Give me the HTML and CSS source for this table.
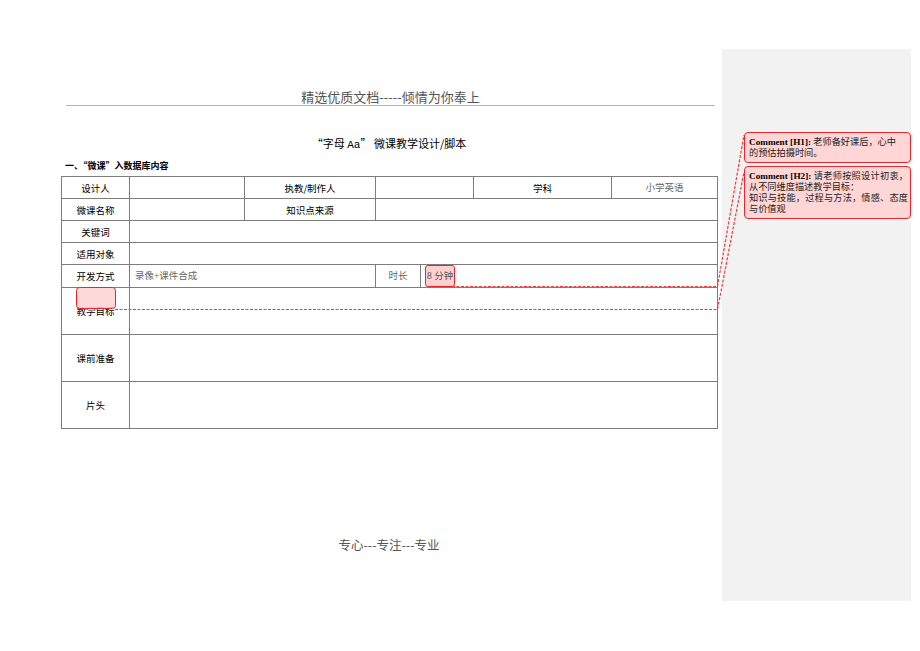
FILE: index.html
```html
<!DOCTYPE html>
<html lang="zh-CN">
<head>
  <meta charset="UTF-8">
  <meta name="viewport" content="width=device-width, initial-scale=1.0">
  <title>字母 Aa 微课教学设计</title>
  <link rel="stylesheet" href="styles.css">
</head>
<body>
  <div class="page">
    <main class="doc">
      <div class="doc-header">精选优质文档-----倾情为你奉上</div>
      <h1 class="title">“字母 <span class="mono">Aa</span>” 微课教学设计/脚本</h1>
      <h2 class="section">一、“微课”入数据库内容</h2>

      <table class="info">
        <colgroup>
          <col style="width: 68px">
          <col style="width: 115px">
          <col style="width: 131px">
          <col style="width: 45px">
          <col style="width: 53px">
          <col style="width: 138px">
          <col style="width: 106px">
        </colgroup>
        <tr>
          <td class="label">设计人</td>
          <td></td>
          <td class="label">执教/制作人</td>
          <td colspan="2"></td>
          <td class="label">学科</td>
          <td class="value center">小学英语</td>
        </tr>
        <tr>
          <td class="label">微课名称</td>
          <td></td>
          <td class="label">知识点来源</td>
          <td colspan="4"></td>
        </tr>
        <tr>
          <td class="label">关键词</td>
          <td colspan="6"></td>
        </tr>
        <tr>
          <td class="label">适用对象</td>
          <td colspan="6"></td>
        </tr>
        <tr class="row-dev">
          <td class="label">开发方式</td>
          <td colspan="2" class="value">录像+课件合成</td>
          <td class="value center">时长</td>
          <td colspan="3" class="value"><span class="mark">8 分钟</span></td>
        </tr>
        <tr class="tall">
          <td class="label">教学目标</td>
          <td colspan="6"></td>
        </tr>
        <tr class="tall">
          <td class="label">课前准备</td>
          <td colspan="6"></td>
        </tr>
        <tr class="tall">
          <td class="label">片头</td>
          <td colspan="6"></td>
        </tr>
      </table>

      <div class="doc-footer">专心---专注---专业</div>
    </main>

    <aside class="comments">
      <div class="comment"><b>Comment [H1]:</b> 老师备好课后，心中<br>的预估拍摄时间。</div>
      <div class="comment"><b>Comment [H2]:</b> 请老师按照设计初衷，从不同维度描述教学目标：<br>知识与技能，过程与方法，情感、态度与价值观</div>
    </aside>

    <svg class="links" width="920" height="651" viewBox="0 0 920 651">
      <rect x="76.5" y="287.5" width="39" height="21" rx="3" fill="#ffd0d0" fill-opacity="0.8" stroke="#e8262b"/>
      <polyline points="452,286.5 717.5,286.5 744,135" fill="none" stroke="#ee3b3b" stroke-width="1.2" stroke-dasharray="3 1.5"/>
      <polyline points="115,309.5 717.5,309.5 744,172" fill="none" stroke="#ee3b3b" stroke-width="1.2" stroke-dasharray="3 1.5"/>
    </svg>
  </div>
</body>
</html>
```

FILE: styles.css
```css
body {
  margin: 0;
  background: #fff;
  font-family: "Liberation Serif", "Noto Sans CJK SC", serif;
  color: #000;
}

.page {
  position: relative;
  display: flex;
  width: 920px;
  height: 651px;
}

.doc {
  width: 661px;
  padding: 88px 0 0 61px;
}

.doc-header {
  margin: 0 7px 0 5px;
  font-family: "Noto Sans CJK SC", sans-serif;
  font-size: 13px;
  line-height: 17px;
  color: #555;
  text-align: center;
  border-bottom: 1px solid #b5b5b5;
}

.title {
  margin: 30px 0 0;
  width: 656px;
  font-family: "Noto Sans CJK SC", sans-serif;
  font-size: 11px;
  font-weight: normal;
  line-height: 14px;
  text-align: center;
}

.mono {
  font-family: "Liberation Mono", monospace;
}

.section {
  margin: 7px 0 0 4px;
  font-family: "Noto Sans CJK SC", sans-serif;
  font-size: 9px;
  font-weight: bold;
  line-height: 14px;
}

.info {
  margin-top: 3px;
  width: 656px;
  table-layout: fixed;
  border-collapse: collapse;
  font-family: "Noto Sans CJK SC", sans-serif;
  font-size: 9.5px;
}

.info td {
  height: 21px;
  padding: 0 5px;
  border: 1px solid #7d7d7d;
  line-height: 12px;
}

.info .row-dev td {
  height: 22px;
}

.info .tall td {
  height: 46px;
}

.label {
  text-align: center;
}

.value {
  font-family: "Liberation Serif", "Noto Sans CJK SC", serif;
  color: #666;
}

.center {
  text-align: center;
}

.mark {
  display: inline-block;
  margin-left: -1px;
  padding: 0 1px;
  line-height: 20px;
  color: #555;
  background: #ffd0d0;
  border: 1px solid #e8262b;
  border-radius: 3px;
}

.doc-footer {
  margin-top: 108px;
  width: 656px;
  font-family: "Noto Sans CJK SC", sans-serif;
  font-size: 12.5px;
  line-height: 16px;
  color: #555;
  text-align: center;
}

.comments {
  box-sizing: border-box;
  width: 189px;
  height: 552px;
  margin-top: 49px;
  padding: 83px 0 0 22px;
  background: #f2f2f2;
  display: flex;
  flex-direction: column;
  gap: 3px;
}

.comment {
  box-sizing: border-box;
  width: 167px;
  padding: 4px 2px 3px 4px;
  font-family: "Liberation Serif", "Noto Sans CJK SC", serif;
  font-size: 9.2px;
  line-height: 11px;
  color: #222;
  background: #ffd6d6;
  border: 1px solid #e8262b;
  border-radius: 4px;
  text-align: justify;
}

.comment b {
  color: #000;
}

.links {
  position: absolute;
  left: 0;
  top: 0;
  pointer-events: none;
}
```
